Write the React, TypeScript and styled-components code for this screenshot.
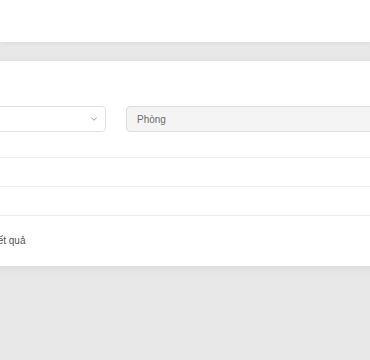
import React from "react";
import styled, { createGlobalStyle } from "styled-components";
import { ChevronDown } from "lucide-react";

const GlobalStyle = createGlobalStyle`
  html, body {
    margin: 0;
    padding: 0;
    background: #e8e8e8;
    font-family: "Liberation Sans", Arial, sans-serif;
    overflow: hidden;
  }
`;

const Page = styled.div`
  width: 370px;
  height: 360px;
  overflow: hidden;
  background: #e8e8e8;
`;

const TopBar = styled.div`
  height: 42px;
  background: #ffffff;
  box-shadow: 0 1px 5px rgba(0, 0, 0, 0.07);
  position: relative;
`;

const Card = styled.div`
  margin: 19px 0 0 -20px;
  width: 480px;
  height: 205px;
  background: #ffffff;
  box-shadow: 0 2px 8px rgba(0, 0, 0, 0.07);
  box-sizing: border-box;
  padding-top: 45px;
  display: flex;
  flex-direction: column;
`;

const FilterRow = styled.div`
  display: flex;
  gap: 20px;
  padding: 0 11px;
  margin-bottom: 25px;
`;

const Select = styled.div`
  width: 115px;
  height: 26px;
  box-sizing: border-box;
  border: 1px solid #e2e2e6;
  border-radius: 4px;
  background: #ffffff;
  display: flex;
  align-items: center;
  justify-content: flex-end;
  padding-right: 6px;
  color: #777777;
`;

const Input = styled.div`
  flex: 1;
  height: 26px;
  box-sizing: border-box;
  border: 1px solid #dcdce2;
  border-radius: 4px;
  background: #f4f4f5;
  display: flex;
  align-items: center;
  padding-left: 10px;
  font-size: 10px;
  color: #6b6b6b;
`;

const Row = styled.div`
  height: 29px;
  border-top: 1px solid #ececee;
  box-sizing: border-box;
`;

const Footer = styled.div`
  flex: 1;
  border-top: 1px solid #ececee;
  display: flex;
  align-items: center;
  padding: 0 11px 1px;
  font-size: 10px;
  color: #555555;
`;

export default function App() {
  return (
    <Page>
      <GlobalStyle />
      <TopBar />
      <Card>
        <FilterRow>
          <Select>
            <ChevronDown size={10} strokeWidth={1.6} />
          </Select>
          <Input>Phòng</Input>
        </FilterRow>
        <Row />
        <Row />
        <Footer>Kết quả</Footer>
      </Card>
    </Page>
  );
}
